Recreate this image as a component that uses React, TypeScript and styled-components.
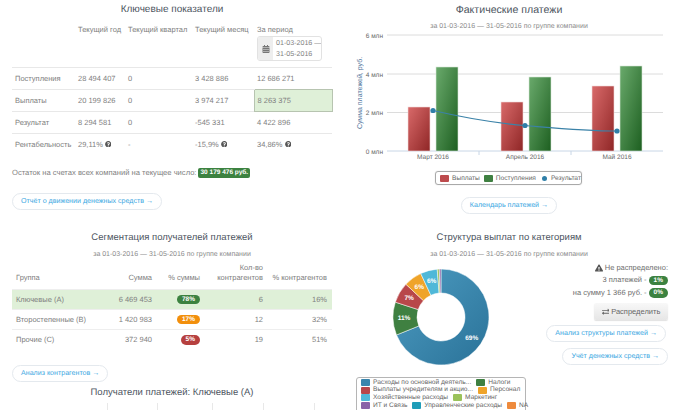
import React from 'react';
import styled, { createGlobalStyle } from 'styled-components';
import { FaCalendarAlt, FaQuestionCircle, FaExchangeAlt, FaExclamationTriangle } from 'react-icons/fa';

const GlobalStyle = createGlobalStyle`
  html, body {
    margin: 0;
    padding: 0;
    background: #fff;
  }
  body {
    font-family: "Liberation Sans", Arial, sans-serif;
    color: #808080;
    font-size: 7.5px;
    overflow: hidden;
    text-rendering: geometricPrecision;
  }
`;

const Page = styled.div`
  width: 680px;
  height: 410px;
  overflow: hidden;
  display: grid;
  grid-template-columns: 340px 340px;
  grid-template-rows: 228px 182px;
`;

const Panel = styled.section`
  padding: 4px 8px 0 12px;
  box-sizing: border-box;
  min-width: 0;
`;

const RightPanel = styled(Panel)`
  padding: 4px 2px 0 0;
`;

const Title = styled.h2<{ $size?: number }>`
  margin: 0;
  font-size: ${p => p.$size ?? 10}px;
  line-height: 12px;
  font-weight: 400;
  color: #4d5561;
  text-align: center;
`;

const Subtitle = styled.div`
  margin-top: 6px;
  font-size: 7px;
  line-height: 10px;
  color: #8a8a8a;
  text-align: center;
`;

const MetricsTable = styled.table`
  width: 320px;
  margin-top: 3px;
  border-collapse: collapse;
  table-layout: fixed;
  font-size: 7.5px;
  th, td {
    padding: 0 0 0 3px;
    font-weight: 400;
    text-align: left;
    vertical-align: middle;
  }
  th {
    height: 48px;
    vertical-align: top;
    padding-top: 6px;
    box-sizing: border-box;
  }
  td {
    height: 22px;
    padding-top: 0;
    box-sizing: border-box;
    border-top: 1px solid #e8e8e8;
  }
`;

const HighlightCell = styled.td`
  && {
    background: #dff0d8;
    border: 1px solid #b7c4b0;
  }
`;

const PeriodPicker = styled.div`
  display: flex;
  width: 65px;
  height: 25px;
  margin-top: 2px;
  border: 1px solid #e2e2e2;
  border-radius: 3px;
  box-sizing: border-box;
  overflow: hidden;
`;

const PickerAddon = styled.span`
  width: 15px;
  flex: none;
  background: #eeeeee;
  color: #777;
  display: flex;
  align-items: center;
  justify-content: center;
  font-size: 8px;
`;

const PickerValue = styled.span`
  padding: 1px 0 0 3px;
  font-size: 7.1px;
  line-height: 11px;
  white-space: nowrap;
`;

const Hint = styled(FaQuestionCircle)`
  color: #555;
  font-size: 6.5px;
  vertical-align: -0.5px;
`;

const Balance = styled.div`
  margin-top: 12px;
  font-size: 7.6px;
  line-height: 11px;
  display: flex;
  align-items: center;
  gap: 2px;
`;

const Tag = styled.span`
  background: #3c8240;
  color: #fff;
  font-weight: 700;
  font-size: 6.5px;
  line-height: 10px;
  padding: 0 2px;
  border-radius: 2px;
`;

const LinkButton = styled.a`
  display: inline-block;
  height: 17px;
  padding: 0 8px;
  box-sizing: border-box;
  border: 1px solid #e4e9ee;
  border-radius: 9px;
  color: #3ba7e2;
  font-size: 7.1px;
  line-height: 15px;
  white-space: nowrap;
  background: #fff;
`;

const ActionRow = styled.div<{ $top: number; $center?: boolean }>`
  margin-top: ${p => p.$top}px;
  text-align: ${p => (p.$center ? 'center' : 'left')};
`;

const ChartSvg = styled.svg`
  display: block;
  margin-top: -1px;
  width: 340px;
  height: 130px;
  font-family: "Liberation Sans", Arial, sans-serif;
`;

const LegendBox = styled.div`
  width: 147px;
  height: 14px;
  margin: 10px 0 0 95px;
  box-sizing: border-box;
  border: 1px solid #a9a9a9;
  border-radius: 3px;
  box-shadow: 0 0 1px rgba(0, 0, 0, 0.25);
  display: flex;
  align-items: center;
  padding-left: 4px;
  gap: 4px;
  font-size: 6.6px;
  color: #666;
`;

const LegendItem = styled.span`
  display: flex;
  align-items: center;
  gap: 3px;
  white-space: nowrap;
`;

const Swatch = styled.i<{ $color: string }>`
  width: 9px;
  height: 7px;
  border-radius: 1px;
  background: ${p => p.$color};
  flex: none;
`;

const Dot = styled(Swatch)`
  width: 5px;
  height: 5px;
  margin: 0 1px 0 2px;
  border-radius: 50%;
`;

const SegmentTable = styled.table`
  width: 320px;
  margin-top: 0;
  border-collapse: collapse;
  table-layout: fixed;
  font-size: 7.5px;
  th, td {
    padding: 0 5px 0 4px;
    font-weight: 400;
    text-align: right;
    vertical-align: middle;
  }
  th {
    height: 29px;
    line-height: 10.5px;
    vertical-align: bottom;
    padding-bottom: 5px;
    padding-left: 0;
    box-sizing: border-box;
  }
  td {
    height: 20px;
    box-sizing: border-box;
    border-top: 1px solid #eeeeee;
  }
  th:first-child, td:first-child {
    padding-left: 4px;
    text-align: left;
  }
`;

const SegmentRow = styled.tr<{ $active?: boolean }>`
  background: ${p => (p.$active ? '#dff0d8' : 'transparent')};
`;

const Pill = styled.span<{ $color: string }>`
  display: inline-block;
  min-width: 9px;
  padding: 0 5px;
  height: 9.5px;
  line-height: 9.5px;
  border-radius: 5px;
  background: ${p => p.$color};
  color: #fff;
  font-weight: 700;
  font-size: 6.5px;
  text-align: center;
`;

const SubHeading = styled(Title)`
  margin-top: 5px;
`;

const CutHeader = styled.div`
  display: grid;
  grid-template-columns: 96px 50px 55px 51px 51px;
  margin-top: 4px;
  height: 12px;
  > span {
    border-right: 1px solid #e8e8e8;
  }
`;

const Structure = styled.div`
  display: flex;
  justify-content: space-between;
  margin-top: 1.5px;
  padding-right: 10px;
`;

const DonutColumn = styled.div`
  width: 200px;
`;

const DonutSvg = styled.svg`
  display: block;
  margin: 5px 0 0 51px;
  width: 100px;
  height: 100px;
  font-family: "Liberation Sans", Arial, sans-serif;
`;

const SideColumn = styled.div`
  display: flex;
  flex-direction: column;
  align-items: flex-end;
  font-size: 7.5px;
  color: #6f6f6f;
`;

const NoteRow = styled.div`
  height: 12.5px;
  line-height: 12.5px;
  display: flex;
  align-items: center;
  gap: 2px;
  white-space: nowrap;
`;

const WarnIcon = styled(FaExclamationTriangle)`
  color: #555;
  font-size: 8px;
`;

const GreyButton = styled.button`
  height: 17px;
  width: 74px;
  margin-top: 4px;
  padding: 0;
  border: 0;
  border-radius: 2px;
  background: linear-gradient(#f8f8f8, #e6e6e6);
  box-shadow: 0 1px 1px rgba(0, 0, 0, 0.12);
  color: #666;
  font: inherit;
  display: flex;
  align-items: center;
  justify-content: center;
  gap: 2px;
`;

const SideLink = styled(LinkButton)<{ $shift?: number; $top?: number }>`
  margin-top: ${p => p.$top ?? 5}px;
  margin-right: ${p => p.$shift ?? 0}px;
`;

const PieLegend = styled.div`
  width: 170px;
  height: 40px;
  margin: 10px 0 0 16px;
  box-sizing: border-box;
  border: 1px solid #b5b5b5;
  border-radius: 3px;
  padding: 1px 0 0 4px;
  font-size: 6.6px;
  line-height: 7.7px;
  color: #666;
`;

const PieLegendRow = styled.div`
  display: flex;
  gap: 5px;
  white-space: nowrap;
  height: 7.7px;
  align-items: center;
`;

const metrics = [
  { label: 'Поступления', cells: ['28 494 407', '0', '3 428 886', '12 686 271'] },
  { label: 'Выплаты', cells: ['20 199 826', '0', '3 974 217', '8 263 375'], mark: true },
  { label: 'Результат', cells: ['8 294 581', '0', '-545 331', '4 422 896'] },
];

const segments = [
  { name: 'Ключевые (А)', sum: '6 469 453', share: '78%', color: '#3c8240', count: 6, part: '16%', active: true },
  { name: 'Второстепенные (В)', sum: '1 420 983', share: '17%', color: '#f28f0c', count: 12, part: '32%' },
  { name: 'Прочие (С)', sum: '372 940', share: '5%', color: '#b6403f', count: 19, part: '51%' },
];

const bars = [
  { label: 'Март 2016', x: 68, red: 107, green: 67, tickX: 93 },
  { label: 'Апрель 2016', x: 161, red: 102, green: 77, tickX: 185 },
  { label: 'Май 2016', x: 252, red: 86, green: 66, tickX: 277 },
];

// top of the svg sits at y=31 on the page
const TOP = 31;

const slices = [
  { from: 0, to: 248, color: 'url(#pieBlue)', label: '69%' },
  { from: 248, to: 288, color: '#3f8041', label: '11%' },
  { from: 288, to: 313, color: '#b8474a', label: '7%' },
  { from: 313, to: 335, color: '#efa42a', label: '6%' },
  { from: 335, to: 355.5, color: '#4fb8d8', label: '6%' },
  { from: 355.5, to: 358, color: '#9bc25b', label: '' },
  { from: 358, to: 360, color: '#8a63a8', label: '' },
];

const polar = (r: number, deg: number) => {
  const a = (deg * Math.PI) / 180;
  return [50 + r * Math.sin(a), 50 - r * Math.cos(a)];
};

const slicePath = (from: number, to: number, R = 48, r = 24) => {
  const [x1, y1] = polar(R, from);
  const [x2, y2] = polar(R, to);
  const [x3, y3] = polar(r, to);
  const [x4, y4] = polar(r, from);
  const large = to - from > 180 ? 1 : 0;
  return `M${x1} ${y1}A${R} ${R} 0 ${large} 1 ${x2} ${y2}L${x3} ${y3}A${r} ${r} 0 ${large} 0 ${x4} ${y4}Z`;
};

const App = () => (
  <>
    <GlobalStyle />
    <Page>
      <Panel>
        <Title>Ключевые показатели</Title>
        <MetricsTable>
          <colgroup>
            <col style={{ width: 63 }} />
            <col style={{ width: 50 }} />
            <col style={{ width: 67 }} />
            <col style={{ width: 62 }} />
            <col style={{ width: 78 }} />
          </colgroup>
          <thead>
            <tr>
              <th />
              <th>Текущий год</th>
              <th>Текущий квартал</th>
              <th>Текущий месяц</th>
              <th>
                За период
                <PeriodPicker>
                  <PickerAddon>
                    <FaCalendarAlt />
                  </PickerAddon>
                  <PickerValue>
                    01-03-2016 —
                    <br />
                    31-05-2016
                  </PickerValue>
                </PeriodPicker>
              </th>
            </tr>
          </thead>
          <tbody>
            {metrics.map(row => (
              <tr key={row.label}>
                <td>{row.label}</td>
                {row.cells.map((cell, i) =>
                  row.mark && i === 3 ? (
                    <HighlightCell key={i}>{cell}</HighlightCell>
                  ) : (
                    <td key={i}>{cell}</td>
                  )
                )}
              </tr>
            ))}
            <tr>
              <td>Рентабельность</td>
              <td>
                29,11% <Hint />
              </td>
              <td>-</td>
              <td>
                -15,9% <Hint />
              </td>
              <td>
                34,86% <Hint />
              </td>
            </tr>
          </tbody>
        </MetricsTable>
        <Balance>
          Остаток на счетах всех компаний на текущее число: <Tag>30 179 476 руб.</Tag>
        </Balance>
        <ActionRow $top={15}>
          <LinkButton>Отчёт о движении денежных средств →</LinkButton>
        </ActionRow>
      </Panel>

      <RightPanel>
        <Title $size={10.6}>Фактические платежи</Title>
        <Subtitle>за 01-03-2016 — 31-05-2016 по группе компании</Subtitle>
        <ChartSvg viewBox="0 0 340 130">
          <defs>
            <linearGradient id="barRed" x1="0" y1="0" x2="1" y2="1">
              <stop offset="0" stopColor="#d96a6a" />
              <stop offset="1" stopColor="#8f2626" />
            </linearGradient>
            <linearGradient id="barGreen" x1="0" y1="0" x2="1" y2="1">
              <stop offset="0" stopColor="#6aaa6c" />
              <stop offset="1" stopColor="#1d5f20" />
            </linearGradient>
          </defs>
          {[
            ['6 млн', 35],
            ['4 млн', 74],
            ['2 млн', 112.5],
          ].map(([label, y]) => (
            <g key={label}>
              <line x1="47" x2="323" y1={+y - TOP} y2={+y - TOP} stroke="#dcdcdc" />
              <text x="43" y={+y - TOP + 2.5} textAnchor="end" fontSize="6.5" fill="#666">
                {label}
              </text>
            </g>
          ))}
          <line x1="47" x2="323" y1={151 - TOP} y2={151 - TOP} stroke="#c8d6e6" />
          <text x="43" y={151 - TOP + 2.5} textAnchor="end" fontSize="6.5" fill="#666">
            0 млн
          </text>
          <text
            transform={`translate(21.5 ${93 - TOP}) rotate(-90)`}
            textAnchor="middle"
            fontSize="7"
            fill="#4d7199"
          >
            Сумма платежей, руб.
          </text>
          {bars.map(b => (
            <g key={b.label}>
              <rect
                x={b.x}
                y={b.red - TOP}
                width="22"
                height={151 - b.red}
                fill="url(#barRed)"
                stroke="#f0dada"
                strokeWidth="0.6"
              />
              <rect
                x={b.x + 28}
                y={b.green - TOP}
                width="22"
                height={151 - b.green}
                fill="url(#barGreen)"
                stroke="#d7e6d7"
                strokeWidth="0.6"
              />
              <text x={b.tickX} y={159 - TOP} textAnchor="middle" fontSize="6.5" fill="#666">
                {b.label}
              </text>
            </g>
          ))}
          <line x1="139" x2="139" y1={151 - TOP} y2={155 - TOP} stroke="#c8d6e6" />
          <line x1="231" x2="231" y1={151 - TOP} y2={155 - TOP} stroke="#c8d6e6" />
          <path
            d={`M93 ${110.5 - TOP}C125 ${118 - TOP} 155 ${123 - TOP} 185 ${125.5 - TOP}C215 ${128 - TOP} 245 ${131 - TOP} 277 ${131 - TOP}`}
            fill="none"
            stroke="#3b82a8"
            strokeWidth="1.2"
          />
          {[
            [93, 110.5],
            [185, 125.5],
            [277, 131],
          ].map(([x, y]) => (
            <circle key={x} cx={x} cy={y - TOP} r="2.6" fill="#2f7fa8" />
          ))}
        </ChartSvg>
        <LegendBox>
          <LegendItem>
            <Swatch $color="#bd4b4d" />
            Выплаты
          </LegendItem>
          <LegendItem>
            <Swatch $color="#3f8041" />
            Поступления
          </LegendItem>
          <LegendItem>
            <Dot $color="#2f7fa8" />
            Результат
          </LegendItem>
        </LegendBox>
        <ActionRow $top={12} $center>
          <LinkButton>Календарь платежей →</LinkButton>
        </ActionRow>
      </RightPanel>

      <Panel>
        <Title $size={9.5}>Сегментация получателей платежей</Title>
        <Subtitle>за 01-03-2016 — 31-05-2016 по группе компании</Subtitle>
        <SegmentTable>
          <colgroup>
            <col style={{ width: 90 }} />
            <col style={{ width: 55 }} />
            <col style={{ width: 48 }} />
            <col style={{ width: 63 }} />
            <col style={{ width: 64 }} />
          </colgroup>
          <thead>
            <tr>
              <th>Группа</th>
              <th>Сумма</th>
              <th>% суммы</th>
              <th>
                Кол-во
                <br />
                контрагентов
              </th>
              <th>% контрагентов</th>
            </tr>
          </thead>
          <tbody>
            {segments.map(s => (
              <SegmentRow key={s.name} $active={s.active}>
                <td>{s.name}</td>
                <td>{s.sum}</td>
                <td>
                  <Pill $color={s.color}>{s.share}</Pill>
                </td>
                <td>{s.count}</td>
                <td>{s.part}</td>
              </SegmentRow>
            ))}
          </tbody>
        </SegmentTable>
        <ActionRow $top={16}>
          <LinkButton>Анализ контрагентов →</LinkButton>
        </ActionRow>
        <SubHeading $size={9.5}>Получатели платежей: Ключевые (А)</SubHeading>
        <CutHeader>
          <span />
          <span />
          <span />
          <span />
          <span />
        </CutHeader>
      </Panel>

      <RightPanel>
        <Title $size={9.5}>Структура выплат по категориям</Title>
        <Subtitle>за 01-03-2016 — 31-05-2016 по группе компании</Subtitle>
        <Structure>
          <DonutColumn>
            <DonutSvg viewBox="0 0 100 100">
              <defs>
                <linearGradient id="pieBlue" x1="0" y1="0" x2="1" y2="1">
                  <stop offset="0" stopColor="#4d9cc2" />
                  <stop offset="1" stopColor="#2a7298" />
                </linearGradient>
              </defs>
              {slices.map(s => (
                <path key={s.from} d={slicePath(s.from, s.to)} fill={s.color} stroke="#fff" strokeWidth="0.5" />
              ))}
              {slices
                .filter(s => s.label)
                .map(s => {
                  const [x, y] = polar(37, (s.from + s.to) / 2);
                  return (
                    <text key={s.from} x={x} y={y + 2} textAnchor="middle" fontSize="6.5" fontWeight="700" fill="#fff">
                      {s.label}
                    </text>
                  );
                })}
            </DonutSvg>
            <PieLegend>
              <PieLegendRow>
                <LegendItem>
                  <Swatch $color="#3a86ad" />
                  Расходы по основной деятель...
                </LegendItem>
                <LegendItem>
                  <Swatch $color="#3f8041" />
                  Налоги
                </LegendItem>
              </PieLegendRow>
              <PieLegendRow>
                <LegendItem>
                  <Swatch $color="#b8474a" />
                  Выплаты учредителям и акцио...
                </LegendItem>
                <LegendItem>
                  <Swatch $color="#efa42a" />
                  Персонал
                </LegendItem>
              </PieLegendRow>
              <PieLegendRow>
                <LegendItem>
                  <Swatch $color="#4fb8d8" />
                  Хозяйственные расходы
                </LegendItem>
                <LegendItem>
                  <Swatch $color="#9bc25b" />
                  Маркетинг
                </LegendItem>
              </PieLegendRow>
              <PieLegendRow>
                <LegendItem>
                  <Swatch $color="#8a63a8" />
                  ИТ и Связь
                </LegendItem>
                <LegendItem>
                  <Swatch $color="#1f9db8" />
                  Управленческие расходы
                </LegendItem>
                <LegendItem>
                  <Swatch $color="#ee8a3c" />
                  NA
                </LegendItem>
              </PieLegendRow>
            </PieLegend>
          </DonutColumn>
          <SideColumn>
            <NoteRow>
              <WarnIcon /> Не распределено:
            </NoteRow>
            <NoteRow>
              3 платежей - <Pill $color="#3c8240">1%</Pill>
            </NoteRow>
            <NoteRow>
              на сумму 1 366 руб. - <Pill $color="#3c8240">0%</Pill>
            </NoteRow>
            <GreyButton>
              <FaExchangeAlt /> Распределить
            </GreyButton>
            <SideLink $shift={2}>Анализ структуры платежей →</SideLink>
            <SideLink $top={6}>Учёт денежных средств →</SideLink>
          </SideColumn>
        </Structure>
      </RightPanel>
    </Page>
  </>
);

export default App;
